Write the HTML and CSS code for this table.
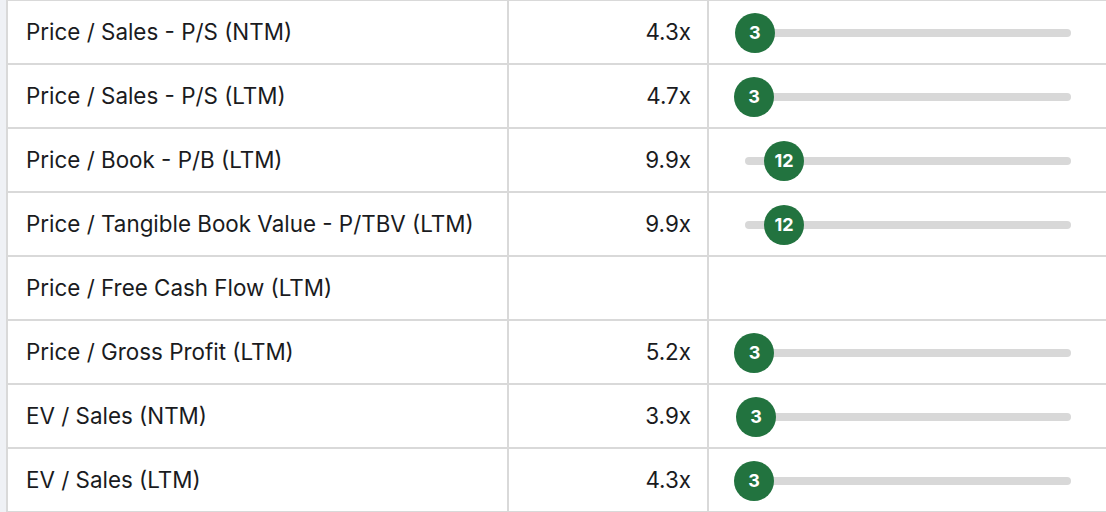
FILE: index.html
```html
<!DOCTYPE html>
<html>
<head>
<meta charset="utf-8">
<link rel="stylesheet" href="styles.css">
</head>
<body>
<div class="table">
  <div class="row">
    <div class="cell label">Price / Sales - P/S (NTM)</div>
    <div class="cell value">4.3x</div>
    <div class="cell rank"><div class="track"><span class="dot" style="left:3%">3</span></div></div>
  </div>
  <div class="row">
    <div class="cell label">Price / Sales - P/S (LTM)</div>
    <div class="cell value">4.7x</div>
    <div class="cell rank"><div class="track"><span class="dot" style="left:2.8%">3</span></div></div>
  </div>
  <div class="row">
    <div class="cell label">Price / Book - P/B (LTM)</div>
    <div class="cell value">9.9x</div>
    <div class="cell rank"><div class="track"><span class="dot" style="left:12%">12</span></div></div>
  </div>
  <div class="row">
    <div class="cell label">Price / Tangible Book Value - P/TBV (LTM)</div>
    <div class="cell value">9.9x</div>
    <div class="cell rank"><div class="track"><span class="dot" style="left:12%">12</span></div></div>
  </div>
  <div class="row">
    <div class="cell label">Price / Free Cash Flow (LTM)</div>
    <div class="cell value"></div>
    <div class="cell rank"></div>
  </div>
  <div class="row">
    <div class="cell label">Price / Gross Profit (LTM)</div>
    <div class="cell value">5.2x</div>
    <div class="cell rank"><div class="track"><span class="dot" style="left:2.9%">3</span></div></div>
  </div>
  <div class="row">
    <div class="cell label">EV / Sales (NTM)</div>
    <div class="cell value">3.9x</div>
    <div class="cell rank"><div class="track"><span class="dot" style="left:3.4%">3</span></div></div>
  </div>
  <div class="row">
    <div class="cell label">EV / Sales (LTM)</div>
    <div class="cell value">4.3x</div>
    <div class="cell rank"><div class="track"><span class="dot" style="left:2.8%">3</span></div></div>
  </div>
</div>
</body>
</html>
```

FILE: styles.css
```css
html, body {
  margin: 0;
  padding: 0;
  background: #eff1f5;
  overflow: hidden;
  width: 1106px;
  height: 512px;
}

body {
  font-family: Inter, Roboto, "Liberation Sans", sans-serif;
  color: #1a1b1e;
}

.table {
  margin: -1px 0 0 6px;
  width: 1101px;
  background: #ffffff;
  border-left: 2px solid #d9d9d9;
  border-top: 2px solid #d9d9d9;
}

.row {
  display: grid;
  grid-template-columns: 501px 200px 398px;
  height: 64px;
  box-sizing: border-box;
  border-bottom: 2px solid #d9d9d9;
}

.cell {
  display: flex;
  align-items: center;
  box-sizing: border-box;
  font-size: 22.4px;
  padding-bottom: 1px;
}

.label {
  padding-left: 18px;
  border-right: 2px solid #d9d9d9;
}

.value {
  justify-content: flex-end;
  padding-right: 16px;
  border-right: 2px solid #d9d9d9;
}

.rank {
  padding-left: 36px;
  padding-bottom: 0;
}

.track {
  position: relative;
  width: 326px;
  height: 8px;
  border-radius: 4px;
  background: #d8d8d8;
  margin-top: 1px;
}

.dot {
  position: absolute;
  top: 50%;
  width: 40px;
  height: 40px;
  margin: -20px 0 0 -20px;
  border-radius: 50%;
  background: #22733f;
  color: #ffffff;
  font-size: 18px;
  font-weight: 700;
  display: flex;
  align-items: center;
  justify-content: center;
}
```
